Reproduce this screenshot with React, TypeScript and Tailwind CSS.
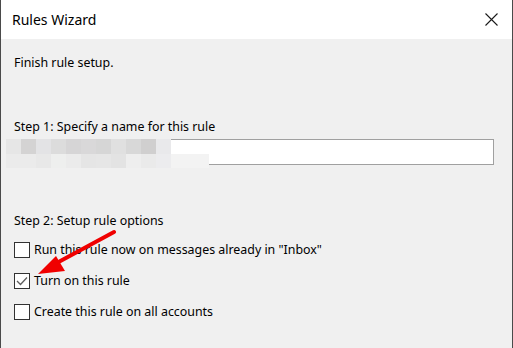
import React from "react";

const font = { fontFamily: '"Noto Sans", "Open Sans", sans-serif' };

function Box({ checked }: { checked?: boolean }) {
  return (
    <div className="w-[16px] h-[16px] border border-[#333333] bg-white flex items-center justify-center shrink-0">
      {checked && (
        <svg width="12" height="10" viewBox="0 0 12 10">
          <polyline points="1,5 4.5,8.5 11,1.5" fill="none" stroke="#5e5e5e" strokeWidth="1.3" />
        </svg>
      )}
    </div>
  );
}

const row1 = ["#e6e6e6", "#d4d3d3", "#e3e3e5", "#dcdcdc", "#d6d5d6", "#d9d8d9", "#d6d6d6", "#e0e0e0", "#d8d8d8", "#d0cfcf", "#e9e9eb"];
const row2 = ["#ebebeb", "#ebebeb", "#e8e8e8", "#eeefee", "#ebebeb", "#e5e5e5", "#e6e6e6", "#e3e3e3", "#eeeeee", "#eaeaea", "#ececee"];

export default function App() {
  return (
    <div
      className="relative w-[513px] h-[348px] overflow-hidden bg-[#f0f0f0] border-l border-r border-[#4a4a4a] text-black flex flex-col"
      style={font}
    >
      <div className="h-[39px] bg-white flex items-center justify-between pl-[11px] pr-[14px] shrink-0">
        <span className="text-[14px] leading-none">Rules Wizard</span>
        <svg width="13" height="13" viewBox="0 0 13 13">
          <path d="M0.5 0.5 L12.5 12.5 M12.5 0.5 L0.5 12.5" stroke="#1a1a1a" strokeWidth="1.1" />
        </svg>
      </div>
      <div className="flex flex-col pl-[13px] pr-[18px] text-[12.4px] leading-[17px]">
        <div className="mt-[15px]">Finish rule setup.</div>
        <div className="mt-[47px]">Step 1: Specify a name for this rule</div>
        <div className="mt-[4px] h-[26px] border border-[#a0a0a0] bg-white" />
        <div className="mt-[47px]">Step 2: Setup rule options</div>
        <div className="mt-[12px] flex flex-col gap-[14px]">
          <div className="flex items-center gap-[4px]">
            <Box />
            <span>Run this rule now on messages already in "Inbox"</span>
          </div>
          <div className="flex items-center gap-[4px]">
            <Box checked />
            <span>Turn on this rule</span>
          </div>
          <div className="flex items-center gap-[4px]">
            <Box />
            <span>Create this rule on all accounts</span>
          </div>
        </div>
      </div>

      {/* pixelated redaction */}
      <div className="absolute left-[5px] top-[139px] flex flex-col">
        <div className="flex">
          {row1.map((c, i) => (
            <div key={i} className="w-[15px] h-[15px]" style={{ backgroundColor: c }} />
          ))}
        </div>
        <div className="flex">
          {row2.map((c, i) => (
            <div key={i} className="w-[15px] h-[14px]" style={{ backgroundColor: c }} />
          ))}
          <div className="w-[38px] h-[14px] bg-[#f3f3f3]" />
        </div>
      </div>

      {/* red arrow */}
      <svg className="absolute left-0 top-0 pointer-events-none" width="513" height="348">
        <line x1="113" y1="232" x2="52" y2="265" stroke="#f00000" strokeWidth="4" strokeLinecap="round" />
        <polygon points="37,274 55,256 64,271" fill="#f00000" />
      </svg>
    </div>
  );
}
